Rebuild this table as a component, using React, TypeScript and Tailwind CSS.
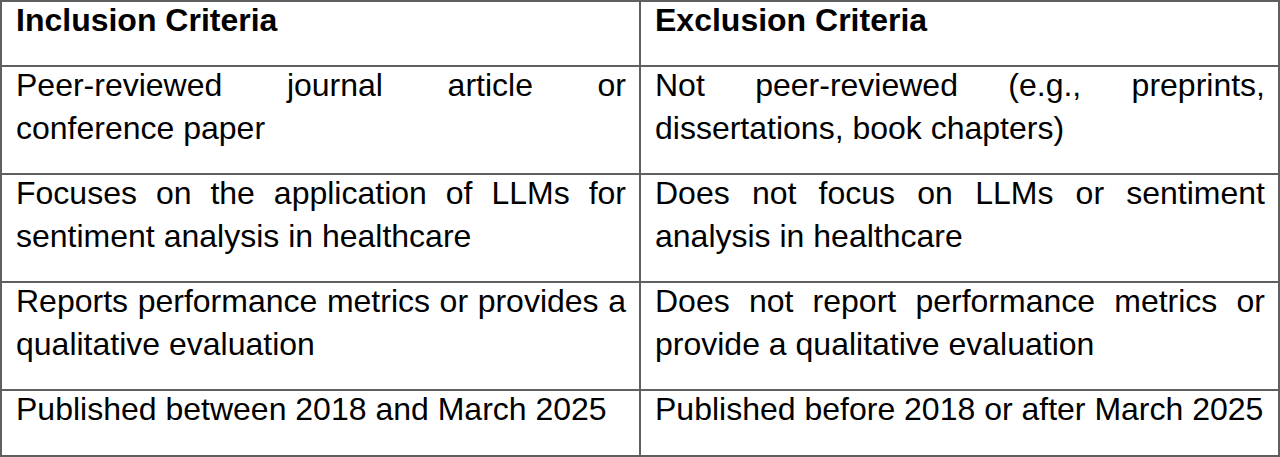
import React from "react";

const rows: { left: string; right: string; h: string }[] = [
  {
    left: "Peer-reviewed journal article or conference paper",
    right: "Not peer-reviewed (e.g., preprints, dissertations, book chapters)",
    h: "h-[108px]",
  },
  {
    left: "Focuses on the application of LLMs for sentiment analysis in healthcare",
    right: "Does not focus on LLMs or sentiment analysis in healthcare",
    h: "h-[108px]",
  },
  {
    left: "Reports performance metrics or provides a qualitative evaluation",
    right: "Does not report performance metrics or provide a qualitative evaluation",
    h: "h-[108px]",
  },
];

export default function App() {
  return (
    <div
      className="w-[1280px] h-[457px] bg-white text-black text-[32px] leading-[43px]"
      style={{ fontFamily: '"Liberation Sans", Arial, sans-serif' }}
    >
      <div className="border-t-2 border-x-2 border-[#5f5f5f] flex flex-col">
        <div className="flex h-[65px] border-b-2 border-[#5f5f5f]">
          <div className="w-[639px] border-r-2 border-[#5f5f5f] pl-[14px] pr-[13px]">
            <p className="-mt-[3px] font-bold">Inclusion Criteria</p>
          </div>
          <div className="flex-1 pl-[14px] pr-[13px]">
            <p className="-mt-[3px] font-bold">Exclusion Criteria</p>
          </div>
        </div>
        {rows.map((r, i) => (
          <div key={i} className={`flex ${r.h} border-b-2 border-[#5f5f5f]`}>
            <div className="w-[639px] border-r-2 border-[#5f5f5f] pl-[14px] pr-[13px]">
              <p className="-mt-[3px] text-justify">{r.left}</p>
            </div>
            <div className="flex-1 pl-[14px] pr-[13px]">
              <p className="-mt-[3px] text-justify">{r.right}</p>
            </div>
          </div>
        ))}
        <div className="flex h-[66px] border-b-2 border-[#5f5f5f]">
          <div className="w-[639px] border-r-2 border-[#5f5f5f] pl-[14px] pr-[13px]">
            <p className="-mt-[3px]">Published between 2018 and March 2025</p>
          </div>
          <div className="flex-1 pl-[14px] pr-[13px]">
            <p className="-mt-[3px]">Published before 2018 or after March 2025</p>
          </div>
        </div>
      </div>
    </div>
  );
}
